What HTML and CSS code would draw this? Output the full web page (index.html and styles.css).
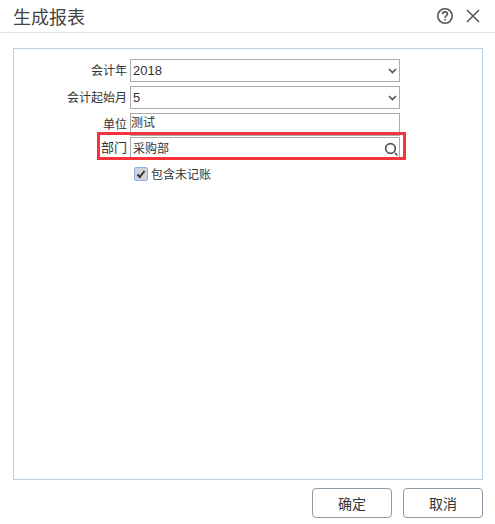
FILE: index.html
```html
<!DOCTYPE html>
<html lang="zh-CN">
<head>
  <meta charset="UTF-8" />
  <title>生成报表</title>
  <link rel="stylesheet" href="styles.css">
</head>
<body>
  <div class="dialog">
    <header class="dialog-head">
      <h1>生成报表</h1>
      <svg class="icon-help" width="18" height="18" viewBox="0 0 18 18" fill="none" stroke="#555" stroke-width="1.6">
        <circle cx="9" cy="9" r="7.2"/>
        <path d="M6.6 7.2c0-1.5 1.1-2.3 2.4-2.3s2.4.8 2.4 2.1c0 1.9-2.4 1.9-2.4 3.7"/>
        <path d="M9 12v1.6"/>
      </svg>
      <svg class="icon-close" width="16" height="16" viewBox="0 0 16 16" fill="none" stroke="#555" stroke-width="1.5">
        <path d="M2 2l12 12M14 2L2 14"/>
      </svg>
    </header>

    <main class="panel">
      <div class="row">
        <label>会计年</label>
        <div class="field num">2018
          <svg class="chev" width="9" height="6" viewBox="0 0 9 6" fill="none" stroke="#555" stroke-width="1.7"><path d="M1 1l3.5 3.5L8 1"/></svg>
        </div>
      </div>
      <div class="row">
        <label>会计起始月</label>
        <div class="field num">5
          <svg class="chev" width="9" height="6" viewBox="0 0 9 6" fill="none" stroke="#555" stroke-width="1.7"><path d="M1 1l3.5 3.5L8 1"/></svg>
        </div>
      </div>
      <div class="row row-text">
        <label>单位</label>
        <div class="field">测试</div>
      </div>
      <div class="row row-dept">
        <label>部门</label>
        <div class="field">采购部
          <svg class="search" width="15" height="15" viewBox="0 0 15 15" fill="none" stroke="#555"><circle cx="6.5" cy="6.5" r="4.8" stroke-width="1.7"/><path d="M11 11l2.5 2.5" stroke-width="1.7"/></svg>
        </div>
        <div class="highlight"></div>
      </div>
      <div class="check-row">
        <span class="check">
          <svg width="10" height="10" viewBox="0 0 10 10" fill="none" stroke="#333" stroke-width="2"><path d="M1.5 5.5l2.3 2.5 4.7-6"/></svg>
        </span>
        <span>包含未记账</span>
      </div>
    </main>

    <footer class="dialog-foot">
      <button>确定</button>
      <button>取消</button>
    </footer>
  </div>
</body>
</html>
```

FILE: styles.css
```css
body {
  margin: 0;
  font-family: "Liberation Sans", "Noto Sans CJK SC", sans-serif;
  font-size: 12px;
  color: #333;
  background-color: #fff;
}

.dialog {
  width: 495px;
  height: 524px;
  display: flex;
  flex-direction: column;
}

.dialog-head {
  height: 32px;
  display: flex;
  align-items: center;
  padding: 0 13px;
  border-bottom: 1px solid #e4e4e4;
}

.dialog-head h1 {
  margin: 0;
  flex: 1;
  font-size: 18px;
  font-weight: normal;
  color: #444;
}

.icon-help {
  margin-right: 11px;
}

.icon-close {
  margin-right: 1px;
}

.panel {
  margin: 15px 12px 0 13px;
  height: 432px;
  box-sizing: border-box;
  border: 1px solid #bdd0e0;
  padding-top: 10px;
}

.row {
  display: flex;
  align-items: center;
  height: 23px;
  margin-bottom: 4px;
  position: relative;
}

.row label {
  width: 116px;
  text-align: right;
  padding: 0 3px 2px 0;
  box-sizing: border-box;
}

.field {
  position: relative;
  width: 270px;
  height: 23px;
  box-sizing: border-box;
  border: 1px solid #acacac;
  line-height: 21px;
  padding-left: 2px;
}

.num {
  font-size: 13px;
}

.row-text {
  margin-bottom: 1px;
}

.row-text .field {
  padding-left: 0;
  line-height: 19px;
}

.row-dept {
  height: 21px;
  margin-bottom: 0;
}

.row-dept label {
  font-size: 13px;
}

.row-dept .field {
  height: 21px;
  line-height: 22px;
}

.chev {
  position: absolute;
  right: 2px;
  top: 8px;
}

.search {
  position: absolute;
  right: 0;
  top: 4px;
}

.highlight {
  position: absolute;
  left: 83px;
  top: -5px;
  width: 309px;
  height: 28px;
  box-sizing: border-box;
  border: 3px solid #f5333a;
}

.check-row {
  display: flex;
  align-items: center;
  margin: 7px 0 0 120px;
}

.check {
  width: 14px;
  height: 14px;
  box-sizing: border-box;
  margin-right: 3px;
  display: flex;
  align-items: center;
  justify-content: center;
  background-color: #d3d3d3;
  border: 1px solid #8ab0e8;
  border-radius: 2px;
}

.dialog-foot {
  display: flex;
  justify-content: flex-end;
  gap: 11px;
  padding: 8px 12px 0 0;
}

.dialog-foot button {
  width: 80px;
  height: 30px;
  background-color: #fff;
  border: 1px solid #8c9aa8;
  border-radius: 4px;
  font-family: inherit;
  font-size: 14px;
  color: #333;
}
```
